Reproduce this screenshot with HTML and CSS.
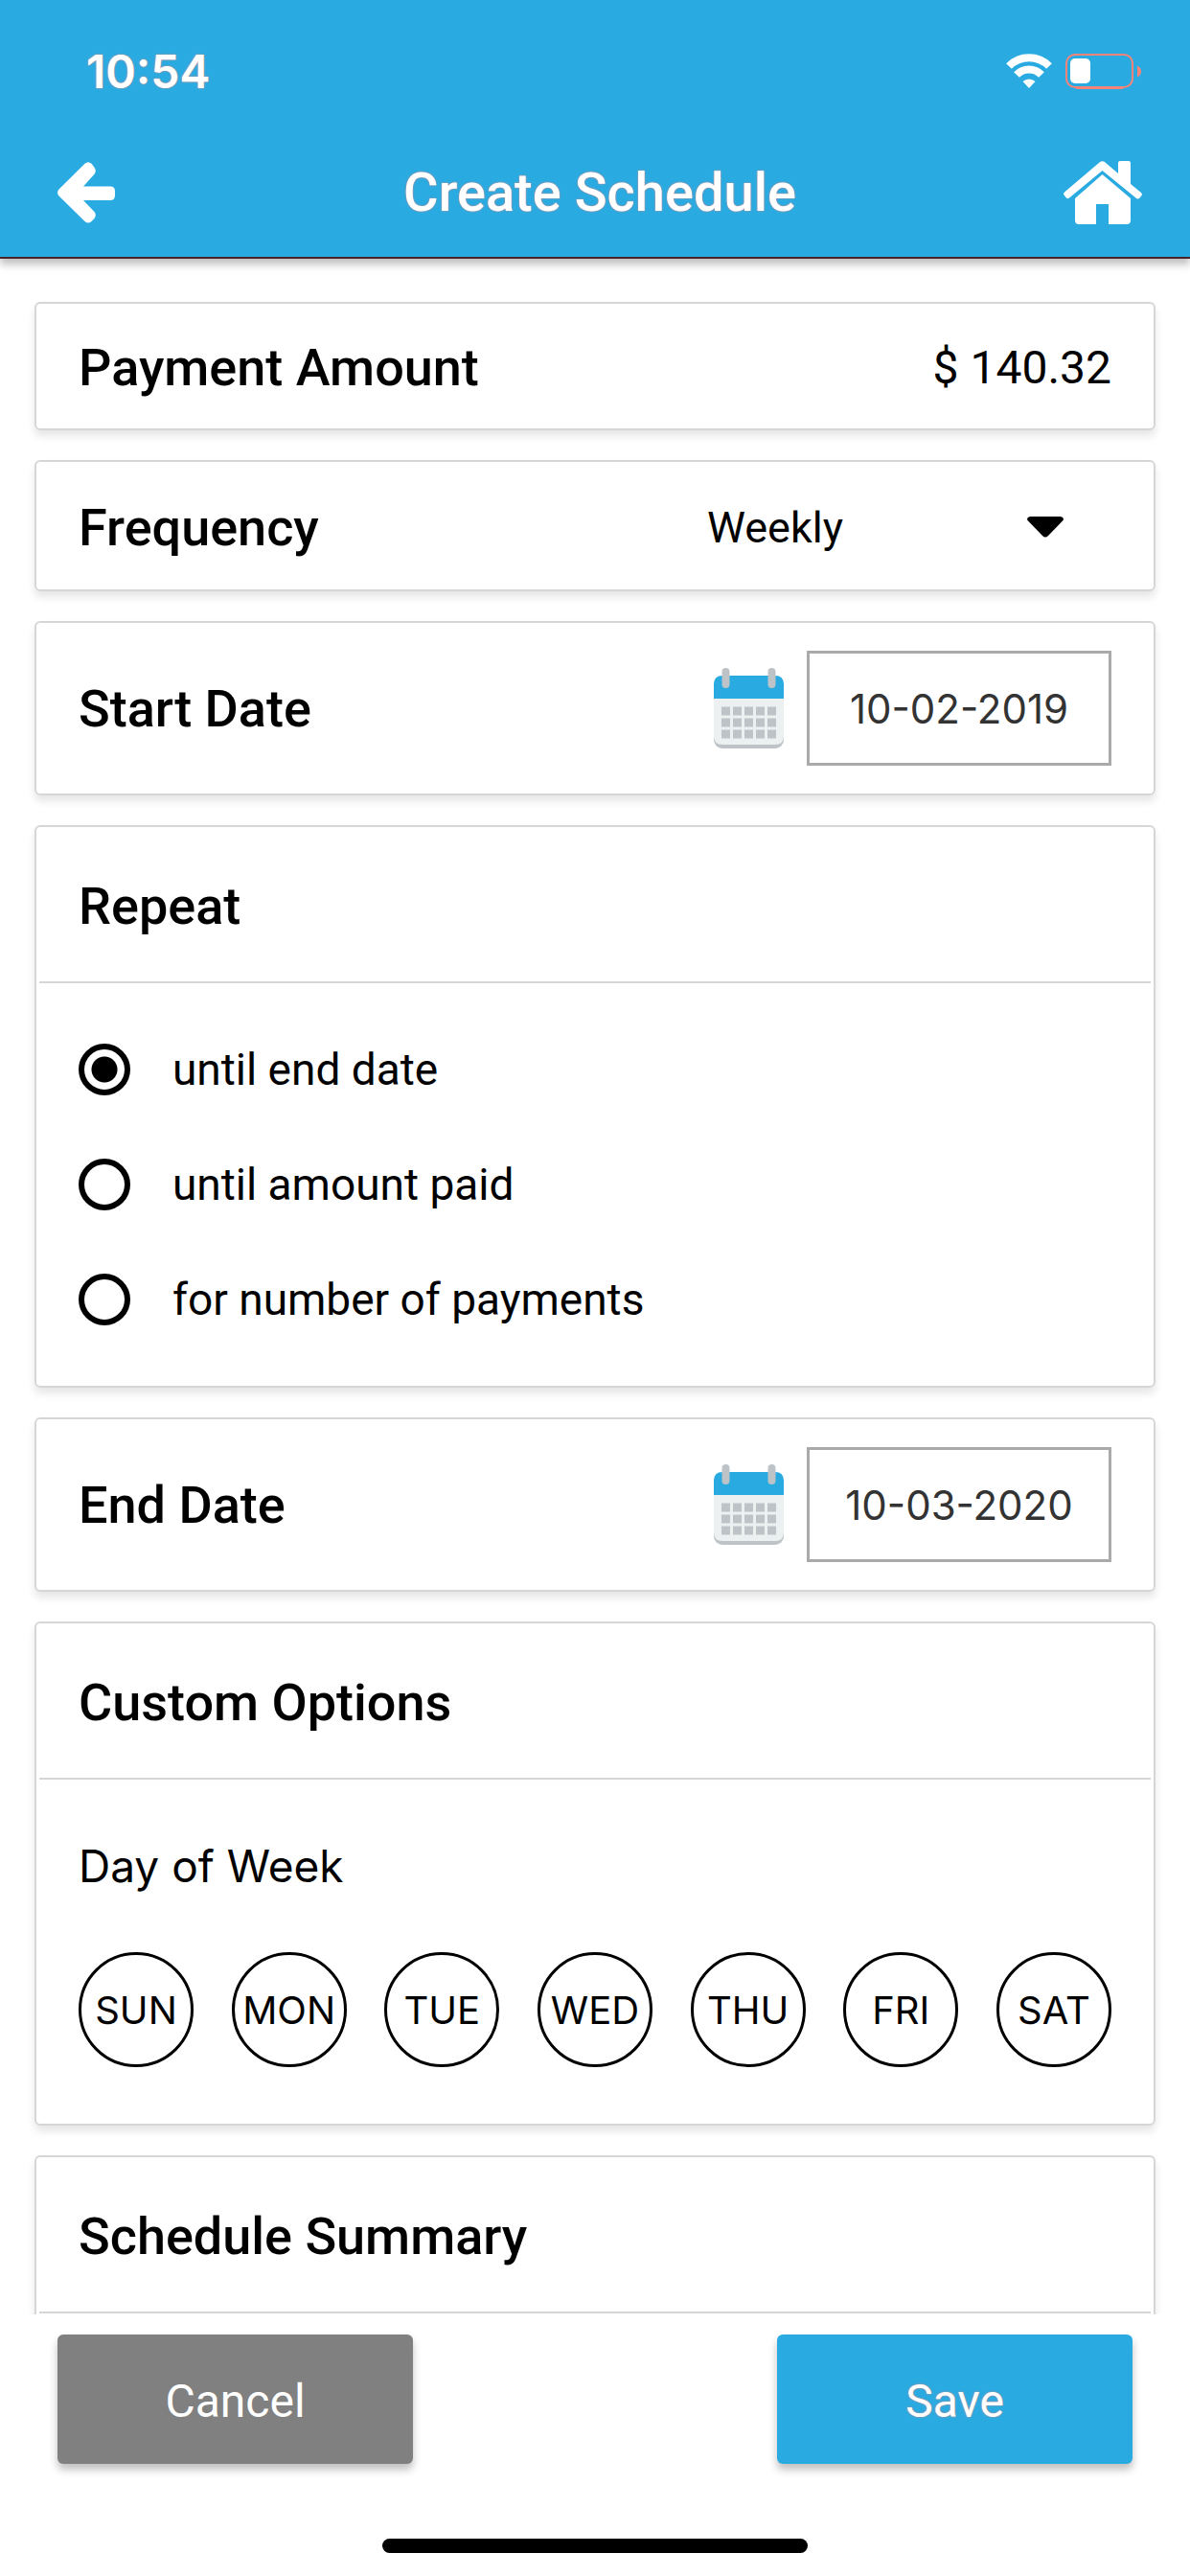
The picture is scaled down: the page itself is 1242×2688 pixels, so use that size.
FILE: index.html
```html
<!DOCTYPE html>
<html lang="en">

<head>
    <meta charset="UTF-8">
    <meta name="viewport" content="width=device-width, initial-scale=1.0">
    <title>Create Schedule</title>
    <link rel="stylesheet" href="styles.css">
</head>

<body>
    <header class="header">
        <div class="status-bar">
            <span class="time">10:54</span>
            <div class="status-icons">
                <svg class="wifi" viewBox="0 0 48 36" width="48" height="36">
                    <g fill="none" stroke="#fff" stroke-width="8">
                        <path d="M3 13a29.500 29.500 0 0 1 42 0" />
                        <path d="M11 22a18 18 0 0 1 26 0" />
                    </g>
                    <path fill="#fff" d="M17.500 29a9.500 9.500 0 0 1 13 0L24 36z" />
                </svg>
                <svg class="battery" viewBox="0 0 80 37" width="80" height="37">
                    <rect x="1" y="1" width="69" height="34" rx="9" fill="none" stroke="#f88379" stroke-width="2" />
                    <path d="M11 36h49" stroke="#f88379" stroke-width="2" />
                    <rect x="5" y="5" width="21" height="26" rx="5" fill="#fff" />
                    <path fill="#f88379" d="M75 12.500q4 2 4 6t-4 6z" />
                </svg>
            </div>
        </div>
        <nav class="nav">
            <a href="#" class="nav-link" aria-label="Back">
                <svg viewBox="0 0 60 64" width="60" height="64">
                    <path fill="#fff" d="M28.500 1.800q3.500-3 7 0l3 4q2.500 3.500 0 7L27 25.500h28q5 0 5 5v4.500q0 5-5 5H27l11.500 12q2.500 3.500 0 7l-3 3q-3.500 3-7 0L1.500 35.500q-3-3.500 0-7z" />
                </svg>
            </a>
            <h1 class="title">Create Schedule</h1>
            <a href="#" class="nav-link" aria-label="Home">
                <svg viewBox="0 0 82 66" width="82" height="66">
                    <path fill="#fff" d="M37.500 1.500Q40.500-1 43.500 1.500L57 13V2q0-2 2-2h9q2 0 2 2v22l11 9q1.500 1.500.5 3l-2 2.500q-2 2-4 0L40.500 10 6 38.500q-2 1.500-3.500-.5L.5 35.500Q-.5 34 1 32.500z" />
                    <path fill="#fff" d="M40.500 14 70 39v23q0 4-4 4H47V45H34v21H16q-4 0-4-4V39z" />
                </svg>
            </a>
        </nav>
    </header>

    <main class="content">
        <section class="card row">
            <h2>Payment Amount</h2>
            <span class="amount">$ 140.32</span>
        </section>

        <section class="card row frequency">
            <h2><label for="frequency">Frequency</label></h2>
            <div class="select">
                <select id="frequency">
                    <option>Weekly</option>
                    <option>Monthly</option>
                </select>
                <svg viewBox="0 0 38 22" width="38" height="22">
                    <path d="M3 0h32q4 1 2.500 4L22 20q-3 3-6 0L.5 4Q-1 1 3 0z" />
                </svg>
            </div>
        </section>

        <section class="card row date">
            <h2><label for="start-date">Start Date</label></h2>
            <div class="date-field">
                <svg viewBox="0 0 73 84" width="73" height="84">
                    <rect y="40" width="73" height="44" rx="9" fill="#bdc3c7" />
                    <path fill="#ecf0f1" d="M0 32h73v39q0 9-9 9H9q-9 0-9-9z" />
                    <path fill="#29abe2" d="M0 32V17q0-9 9-9h55q9 0 9 9v15z" />
                    <path stroke="#bdc3c7" stroke-width="8" stroke-linecap="round" d="M12.500 4v13M60.500 4v13" />
                    <path stroke="#bdc3c7" stroke-width="9" stroke-dasharray="9 3" d="M8 45h57M8 57h57M8 69h57" />
                </svg>
                <input type="text" id="start-date" value="10-02-2019">
            </div>
        </section>

        <section class="card">
            <h2 class="card-head">Repeat</h2>
            <div class="options">
                <label class="option"><input type="radio" name="repeat" checked>until end date</label>
                <label class="option"><input type="radio" name="repeat">until amount paid</label>
                <label class="option"><input type="radio" name="repeat">for number of payments</label>
            </div>
        </section>

        <section class="card row date">
            <h2><label for="end-date">End Date</label></h2>
            <div class="date-field">
                <svg viewBox="0 0 73 84" width="73" height="84">
                    <rect y="40" width="73" height="44" rx="9" fill="#bdc3c7" />
                    <path fill="#ecf0f1" d="M0 32h73v39q0 9-9 9H9q-9 0-9-9z" />
                    <path fill="#29abe2" d="M0 32V17q0-9 9-9h55q9 0 9 9v15z" />
                    <path stroke="#bdc3c7" stroke-width="8" stroke-linecap="round" d="M12.500 4v13M60.500 4v13" />
                    <path stroke="#bdc3c7" stroke-width="9" stroke-dasharray="9 3" d="M8 45h57M8 57h57M8 69h57" />
                </svg>
                <input type="text" id="end-date" value="10-03-2020">
            </div>
        </section>

        <section class="card">
            <h2 class="card-head">Custom Options</h2>
            <div class="custom">
                <h3>Day of Week</h3>
                <div class="days">
                    <button type="button">SUN</button>
                    <button type="button">MON</button>
                    <button type="button">TUE</button>
                    <button type="button">WED</button>
                    <button type="button">THU</button>
                    <button type="button">FRI</button>
                    <button type="button">SAT</button>
                </div>
            </div>
        </section>

        <section class="card">
            <h2 class="card-head">Schedule Summary</h2>
            <div class="options"></div>
        </section>
    </main>

    <footer class="footer">
        <div class="buttons">
            <button type="button" class="btn cancel">Cancel</button>
            <button type="button" class="btn save">Save</button>
        </div>
        <div class="home-bar"></div>
    </footer>
</body>

</html>
```
FILE: styles.css
```css
* {
    box-sizing: border-box;
    margin: 0;
    padding: 0;
}

body {
    height: 100vh;
    display: flex;
    flex-direction: column;
    background: #fff;
    color: #000;
    font-family: Roboto, "Liberation Sans", sans-serif;
}

svg {
    display: block;
}

button,
input,
select {
    appearance: none;
    border: none;
    background: none;
    color: inherit;
    font-family: inherit;
}

/* header */
.header {
    position: relative;
    flex-shrink: 0;
    background: #29abe2;
    color: #fff;
    border-bottom: 2px solid #4a2228;
    box-shadow: 0 6px 8px rgba(0, 0, 0, 0.25);
}

.status-bar {
    display: flex;
    justify-content: space-between;
    align-items: center;
    height: 134px;
    padding: 14px 50px 0 90px;
}

.time {
    font-family: Inter, sans-serif;
    font-size: 48px;
    font-weight: 600;
}

.time,
.title,
.save {
    text-shadow: 0 0 2px #f88379;
}

.status-icons {
    display: flex;
    gap: 14px;
}

.nav {
    display: grid;
    grid-template-columns: 82px 1fr 82px;
    align-items: center;
    height: 134px;
    padding: 0 50px 0 60px;
}

.title {
    font-size: 56px;
    font-weight: 500;
    text-align: center;
}

/* cards */
.content {
    flex: 1;
    min-height: 0;
    display: flex;
    flex-direction: column;
    gap: 31px;
    padding: 45px 36px 0;
    overflow-y: auto;
    scrollbar-width: none;
}

.card {
    flex-shrink: 0;
    border: 2px solid #d6d6d6;
    border-radius: 6px;
    box-shadow: 0 6px 8px rgba(0, 0, 0, 0.1);
}

.card h2 {
    font-size: 54px;
    font-weight: 500;
}

.row {
    display: flex;
    justify-content: space-between;
    align-items: center;
    height: 134px;
    padding: 3px 44px 0;
}

.amount {
    font-size: 48px;
}

.frequency {
    height: 137px;
}

.select {
    display: grid;
    align-items: center;
    width: 422px;
}

.select select,
.select svg {
    grid-area: 1 / 1;
}

.select svg {
    justify-self: end;
    margin-right: 50px;
    pointer-events: none;
}

.select select {
    font-size: 45px;
}

.date {
    height: 182px;
    padding: 0 44px;
}

.date-field {
    display: flex;
    align-items: center;
    gap: 24px;
}

.date-field input {
    width: 318px;
    height: 120px;
    border: 3px solid #aaa;
    color: #333;
    font-family: Inter, sans-serif;
    font-size: 42px;
    text-align: center;
}

.card-head {
    display: flex;
    align-items: center;
    height: 163px;
    margin: 0 3px;
    padding: 3px 41px 0;
    border-bottom: 2px solid #d6d6d6;
}

.options {
    display: flex;
    flex-direction: column;
    gap: 66px;
    padding: 63px 44px;
}

.option {
    display: flex;
    align-items: center;
    gap: 44px;
    height: 54px;
    font-size: 46px;
}

.option input {
    width: 54px;
    height: 54px;
    border: 6px solid #000;
    border-radius: 50%;
}

.option input:checked {
    background: radial-gradient(#000 13px, transparent 14px);
}

.custom {
    padding: 60px 44px 59px;
}

.custom h3 {
    font-family: Inter, sans-serif;
    font-size: 46px;
    font-weight: 400;
    line-height: 60px;
    margin-bottom: 60px;
}

.days {
    display: flex;
    justify-content: space-between;
}

.days button {
    width: 120px;
    height: 120px;
    border: 3px solid #000;
    border-radius: 50%;
    font-family: Inter, sans-serif;
    font-size: 40px;
}

/* footer */
.footer {
    flex-shrink: 0;
    padding: 21px 60px 24px;
}

.buttons {
    display: flex;
    justify-content: space-between;
    margin-bottom: 78px;
}

.btn {
    width: 371px;
    height: 135px;
    padding-top: 3px;
    border-radius: 6px;
    box-shadow: 0 6px 8px rgba(0, 0, 0, 0.25);
    color: #fff;
    font-size: 48px;
}

.cancel {
    background: #808080;
}

.save {
    background: #29abe2;
}

.home-bar {
    width: 444px;
    height: 15px;
    margin: 0 auto;
    border-radius: 8px;
    background: #000;
}
```
